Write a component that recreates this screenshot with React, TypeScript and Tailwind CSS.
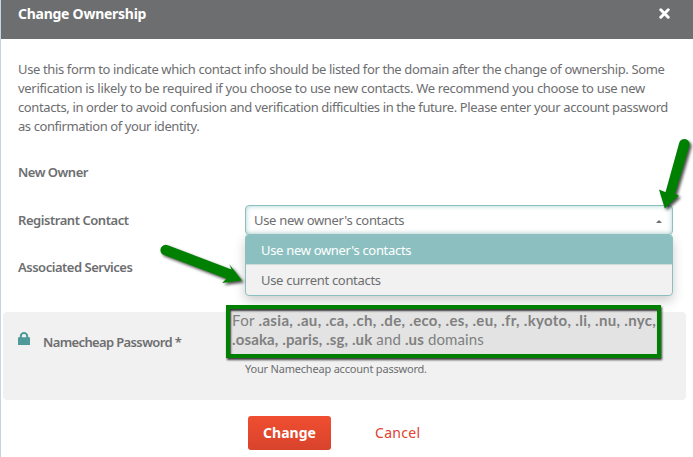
import React from "react";

const paragraph = [
  { text: "Use this form to indicate which contact info should be listed for the domain after the change of ownership. Some", track: "tracking-[-0.37px]" },
  { text: "verification is likely to be required if you choose to use new contacts. We recommend you choose to use new", track: "tracking-[-0.31px]" },
  { text: "contacts, in order to avoid confusion and verification difficulties in the future. Please enter your account password", track: "tracking-[-0.375px]" },
  { text: "as confirmation of your identity.", track: "tracking-[-0.42px]" },
];

function Header() {
  return (
    <header className="flex h-[39px] items-start justify-between bg-[#6d6e70] pl-[17px] pr-[23px] text-white">
      <h1 className="mt-[4px] text-[14px] leading-[20px] font-bold tracking-[-0.26px] whitespace-nowrap">Change Ownership</h1>
      <svg className="mt-[8px] h-[11px] w-[11px]" viewBox="0 0 11 11" stroke="currentColor" strokeWidth="3" strokeLinecap="round">
        <path d="M1.8 1.8L9.2 9.2M9.2 1.8L1.8 9.2" />
      </svg>
    </header>
  );
}

function Select() {
  return (
    <div className="relative h-[30px] w-[428px] tracking-[-0.31px]">
      <div className="flex h-[30px] items-center justify-between rounded-[4px] border border-[#8cc0c0] bg-white pr-[10px] pl-[8px] shadow-[inset_0_0_5px_rgba(140,192,192,0.75)]">
        <span className="text-[13px] leading-[20px]">Use new owner's contacts</span>
        <svg className="mt-[2px] h-[3px] w-[6px]" viewBox="0 0 6 3" fill="#6d6e70">
          <path d="M0 3L3 0L6 3Z" />
        </svg>
      </div>
      <ul className="absolute top-[29px] left-0 z-10 w-[428px] overflow-hidden rounded-[4px] border border-[#8cc0c0] bg-[#f1f1f1] text-[13px] leading-[20px] shadow-[0_5px_12px_rgba(0,0,0,0.2)]">
        <li className="flex h-[30px] items-center border-b border-[#cfdcdc] bg-[#8cc0c0] pl-[15px] text-white">Use new owner's contacts</li>
        <li className="flex h-[30px] items-center pl-[15px]">Use current contacts</li>
      </ul>
    </div>
  );
}

function DomainNote() {
  return (
    <div className="absolute top-[-7px] left-[223px] z-20 h-[53px] w-[435px] border-4 border-[#008000] bg-[#e3e3e3] shadow-[1px_2px_2px_rgba(0,0,0,0.75),inset_1px_2px_2px_rgba(0,0,0,0.75)]">
      <div className="mt-[2px] ml-[2px] font-['Lato',sans-serif] text-[15px] leading-[19px] whitespace-nowrap text-[#808080]">
        <div className="tracking-[0.31px]">For <b>.asia, .au, .ca, .ch, .de, .eco, .es, .eu, .fr, .kyoto, .li, .nu, .nyc,</b></div>
        <div className="tracking-[0.13px]"><b>.osaka, .paris, .sg, .uk</b> and <b>.us</b> domains</div>
      </div>
    </div>
  );
}

function Arrows() {
  return (
    <svg className="pointer-events-none absolute inset-0 z-30 h-[457px] w-[693px]" viewBox="0 0 693 457">
      <g fill="#008000" className="drop-shadow-[2px_2px_1.5px_rgba(0,0,0,0.7)]">
        <path d="M678.3 142.6A5 5 0 0 1 688.3 145.8L674 193.8L677.8 195.5L663.8 208.5L658 189.5L664.5 192.3Z" />
        <path d="M166.8 245.3L230.5 269.4L228.2 264L241 280.5L221 283L225.5 278.8L162.5 254.8A5 5 0 0 1 166.8 245.3Z" />
      </g>
    </svg>
  );
}

export default function App() {
  return (
    <main className="relative h-[457px] w-[693px] overflow-hidden border-l border-[#c8d3e8] bg-white font-['Noto_Sans',sans-serif] text-[13px] text-[#6d6e70]">
      <Header />
      <div className="mt-[21px] ml-[17px] leading-[19px] whitespace-nowrap">
        {paragraph.map((line) => (
          <div key={line.text}><span className={line.track}>{line.text}</span></div>
        ))}
      </div>
      <h2 className="mt-[26px] ml-[17px] h-[20px] leading-[20px] font-semibold tracking-[-0.5px]">New Owner</h2>
      <div className="mt-[23px] flex h-[30px] items-center pl-[17px]">
        <div className="mt-[2px] w-[227px] font-semibold tracking-[-0.45px]">Registrant Contact</div>
        <Select />
      </div>
      <h2 className="mt-[22px] ml-[17px] h-[20px] leading-[20px] font-semibold tracking-[-0.48px]">Associated Services</h2>
      <section className="relative mt-[35px] ml-[2px] h-[88px] w-[683px] rounded-[4px] bg-[#f1f1f1]">
        <div className="flex items-start pt-[20px] pl-[15px]">
          <svg className="h-[13px] w-[12px]" viewBox="0 0 12 13" fill="none">
            <path d="M2.8 6V4A3.2 3 0 0 1 9.2 4V6" stroke="#4f9999" strokeWidth="2" />
            <rect y="5.2" width="12" height="7.8" rx="0.5" fill="#4f9999" />
          </svg>
          <label className="ml-[13px] leading-[20px] font-semibold tracking-[-0.63px]">Namecheap Password *</label>
        </div>
        <p className="mt-[8px] ml-[242px] text-[11px] leading-[18px] tracking-[-0.2px]">Your Namecheap account password.</p>
        <DomainNote />
      </section>
      <div className="mt-[16px] ml-[247px] flex items-center">
        <button className="h-[34px] w-[83px] rounded-[3px] bg-linear-to-b from-[#f04e30] to-[#d8432c] text-[14px] leading-[20px] font-bold text-white">Change</button>
        <button className="ml-[44px] text-[14px] leading-[20px] tracking-[0.3px] text-[#e0402c]">Cancel</button>
      </div>
      <Arrows />
    </main>
  );
}
